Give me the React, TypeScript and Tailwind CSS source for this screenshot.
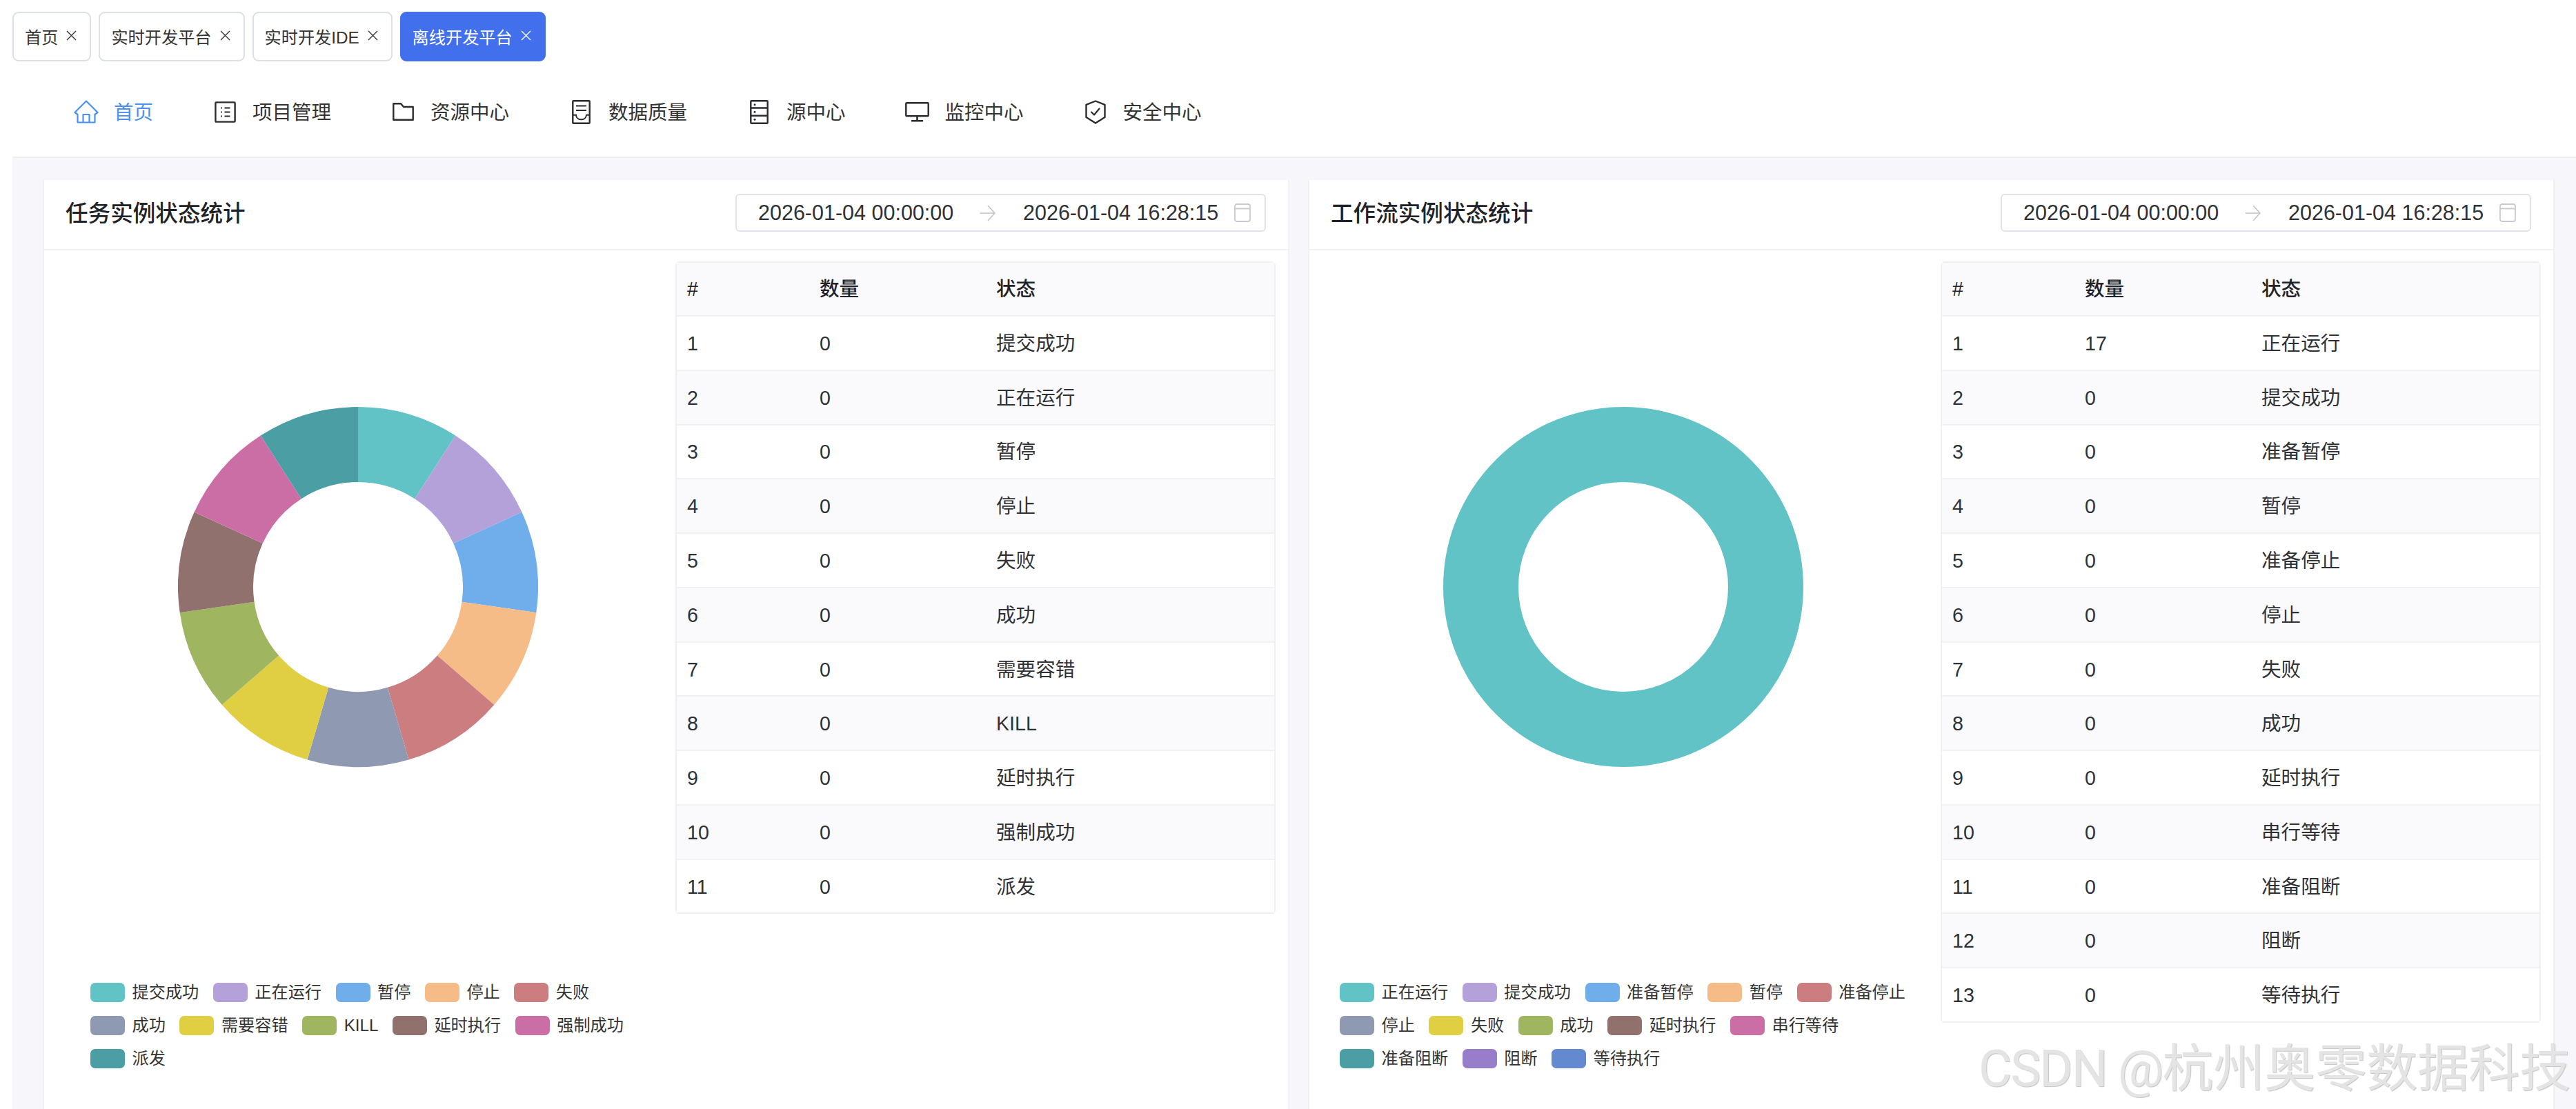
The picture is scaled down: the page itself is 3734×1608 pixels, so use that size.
import type { ReactNode } from 'react';

type Status = { label: string; color: string };
type TableRow = { count: number; label: string };

const palette = {
  teal: '#62c3c7',
  lavender: '#b4a1da',
  blue: '#70aeeb',
  peach: '#f5bc88',
  rose: '#cb7d7f',
  slate: '#8f99b2',
  yellow: '#e0cf43',
  green: '#a0b560',
  brown: '#91716d',
  pink: '#cc6ea6',
  darkTeal: '#4b9ea3',
  purple: '#987eca',
  indigo: '#638ad0',
};

const taskLegend: Status[] = [
  { label: '提交成功', color: palette.teal },
  { label: '正在运行', color: palette.lavender },
  { label: '暂停', color: palette.blue },
  { label: '停止', color: palette.peach },
  { label: '失败', color: palette.rose },
  { label: '成功', color: palette.slate },
  { label: '需要容错', color: palette.yellow },
  { label: 'KILL', color: palette.green },
  { label: '延时执行', color: palette.brown },
  { label: '强制成功', color: palette.pink },
  { label: '派发', color: palette.darkTeal },
];

const flowLegend: Status[] = [
  { label: '正在运行', color: palette.teal },
  { label: '提交成功', color: palette.lavender },
  { label: '准备暂停', color: palette.blue },
  { label: '暂停', color: palette.peach },
  { label: '准备停止', color: palette.rose },
  { label: '停止', color: palette.slate },
  { label: '失败', color: palette.yellow },
  { label: '成功', color: palette.green },
  { label: '延时执行', color: palette.brown },
  { label: '串行等待', color: palette.pink },
  { label: '准备阻断', color: palette.darkTeal },
  { label: '阻断', color: palette.purple },
  { label: '等待执行', color: palette.indigo },
];

const taskRows: TableRow[] = taskLegend.map((s) => ({ count: 0, label: s.label }));
const flowRows: TableRow[] = flowLegend.map((s, i) => ({ count: i === 0 ? 17 : 0, label: s.label }));

const tabs = [
  { label: '首页', active: false },
  { label: '实时开发平台', active: false },
  { label: '实时开发IDE', active: false },
  { label: '离线开发平台', active: true },
];

const stroke = { fill: 'none', stroke: 'currentColor', strokeWidth: 2.4 };

const navItems: { label: string; active?: boolean; icon: ReactNode }[] = [
  {
    label: '首页',
    active: true,
    icon: (
      <svg width="36" height="34" viewBox="0 0 36 34" {...stroke} strokeWidth={2.2} strokeLinejoin="round">
        <path d="M18 1.5 L1.5 18 L5.5 21 V32.5 H30.5 V21 L34.5 18 Z" />
        <path d="M13.5 32.5 V21 H22.5 V32.5" />
      </svg>
    ),
  },
  {
    label: '项目管理',
    icon: (
      <svg width="31" height="31" viewBox="0 0 31 31" {...stroke}>
        <rect x="1.4" y="1.4" width="28.2" height="28.2" rx="1" />
        <path d="M9.2 9.5 H11 M14.5 9.5 H22.5 M9.2 15.5 H11 M14.5 15.5 H22.5 M9.2 21.5 H11 M14.5 21.5 H22.5" strokeWidth={1.9} />
      </svg>
    ),
  },
  {
    label: '资源中心',
    icon: (
      <svg width="31" height="26" viewBox="0 0 31 26" {...stroke} strokeLinejoin="round">
        <path d="M1.3 1.3 H12 L16 6 H29.7 V24.7 H1.3 Z" />
      </svg>
    ),
  },
  {
    label: '数据质量',
    icon: (
      <svg width="27" height="35" viewBox="0 0 27 35" {...stroke}>
        <rect x="1.3" y="1.3" width="24.4" height="32.4" rx="1" />
        <path d="M6 8.5 H21 M6 15 H21" strokeWidth={2} />
        <path d="M1.3 21.7 H6 C6.5 30.5 20.5 30.5 21 21.7 H25.7" strokeWidth={2} />
      </svg>
    ),
  },
  {
    label: '源中心',
    icon: (
      <svg width="27" height="35" viewBox="0 0 27 35" {...stroke}>
        <rect x="1.3" y="1.3" width="24.4" height="32.4" rx="1" />
        <path d="M1.3 11.5 H25.7 M1.3 22.8 H25.7" />
        <circle cx="7" cy="6.7" r="1.5" fill="currentColor" stroke="none" />
        <circle cx="7" cy="17.3" r="1.5" fill="currentColor" stroke="none" />
        <circle cx="7" cy="28.3" r="1.5" fill="currentColor" stroke="none" />
      </svg>
    ),
  },
  {
    label: '监控中心',
    icon: (
      <svg width="35" height="29" viewBox="0 0 35 29" {...stroke}>
        <rect x="1.3" y="1.3" width="32.4" height="19" rx="1" />
        <path d="M17.5 20.5 V27 M9 27.3 H26" strokeWidth={2.6} />
      </svg>
    ),
  },
  {
    label: '安全中心',
    icon: (
      <svg width="30" height="35" viewBox="0 0 30 35" {...stroke} strokeLinejoin="round">
        <path d="M15 1.5 L28.5 6.8 V25 L15 33.5 L1.5 25 V6.8 Z" />
        <path d="M8.5 17 L13 21.5 L21 12" strokeWidth={2.2} />
      </svg>
    ),
  },
];

// one slice of the ring, angles in degrees clockwise from the top
function slicePath(cx: number, cy: number, r: number, inner: number, from: number, to: number) {
  const pt = (radius: number, deg: number) => {
    const a = ((deg - 90) * Math.PI) / 180;
    return `${cx + radius * Math.cos(a)} ${cy + radius * Math.sin(a)}`;
  };
  return `M${pt(r, from)} A${r} ${r} 0 0 1 ${pt(r, to)} L${pt(inner, to)} A${inner} ${inner} 0 0 0 ${pt(inner, from)} Z`;
}

function Donut({ colors }: { colors: string[] }) {
  if (colors.length === 1) {
    return (
      <svg width="522" height="524" viewBox="0 0 522 524">
        <circle cx="261" cy="262" r="206.5" fill="none" stroke={colors[0]} strokeWidth="109" />
      </svg>
    );
  }
  const step = 360 / colors.length;
  return (
    <svg width="522" height="524" viewBox="0 0 522 524">
      {colors.map((color, i) => (
        <path key={color} d={slicePath(261, 262, 261, 152, i * step, (i + 1) * step)} fill={color} />
      ))}
    </svg>
  );
}

function Legend({ items, className }: { items: Status[]; className: string }) {
  return (
    <div className={`mt-[312px] flex w-[830px] flex-wrap gap-x-[20.5px] gap-y-[20px] ${className}`}>
      {items.map((item) => (
        <div key={item.label} className="flex h-[28px] items-center gap-[10.5px] text-[24.2px] text-[#333]">
          <span className="h-[28px] w-[50px] rounded-[7px]" style={{ backgroundColor: item.color }} />
          <span>{item.label}</span>
        </div>
      ))}
    </div>
  );
}

function DateRange({ end }: { end: string }) {
  return (
    <div className="flex h-[55px] w-[769px] items-center whitespace-nowrap rounded-[6px] border-2 border-[#e2e2e8] pl-[31px] text-[30.5px] text-[#2f3136]">
      <span className="w-[284px]">2026-01-04 00:00:00</span>
      <svg className="ml-[37px] mr-[40px]" width="23" height="26" viewBox="0 0 23 26" fill="none" stroke="#c4c4c8" strokeWidth="1.6">
        <path d="M0.5 13 H22 M12 2 L22 13 L12 24" />
      </svg>
      <span className="w-[276px]">{end}</span>
      <svg className="ml-[30px]" width="24" height="27" viewBox="0 0 24 27" fill="none" stroke="#cbcbcf" strokeWidth="1.8">
        <rect x="1" y="1" width="22" height="25" rx="3" />
        <path d="M1 7.5 H23" />
      </svg>
    </div>
  );
}

function StatusTable({ rows }: { rows: TableRow[] }) {
  return (
    <div className="mt-[16px] w-[870px] self-start rounded-[6px] border-x-2 border-t-2 border-[#f0f0f5] text-[28.6px] text-[#2f3136]">
      <div className="grid h-[78px] grid-cols-[192px_256px_1fr] items-center border-b-2 border-[#f0f0f5] bg-[#fafafc] font-medium text-[#1f2329]">
        <span className="pl-[15px]">#</span>
        <span className="pl-[15px]">数量</span>
        <span className="pl-[15px]">状态</span>
      </div>
      {rows.map((row, i) => (
        <div
          key={row.label}
          className={`grid h-[78.77px] grid-cols-[192px_256px_1fr] items-center border-b-2 border-[#f0f0f5] pt-[2px] ${
            i % 2 === 1 ? 'bg-[#fafafc]' : 'bg-white'
          }`}
        >
          <span className="pl-[15px]">{i + 1}</span>
          <span className="pl-[15px]">{row.count}</span>
          <span className="pl-[15px]">{row.label}</span>
        </div>
      ))}
    </div>
  );
}

function StatCard({
  title,
  end,
  legend,
  legendClass,
  rows,
  ring,
}: {
  title: string;
  end: string;
  legend: Status[];
  legendClass: string;
  rows: TableRow[];
  ring: string[];
}) {
  return (
    <section className="flex h-full w-[1807px] flex-col border-x-2 border-[#f0f0f5] bg-white">
      <header className="flex h-[102px] items-center justify-between border-b-2 border-[#f0f0f5] pb-[5px] pl-[31px] pr-[32px]">
        <h2 className="pt-[3px] text-[32.6px] font-medium text-[#1f2329]">{title}</h2>
        <DateRange end={end} />
      </header>
      <div className="flex">
        <div className="w-[915px]">
          <div className="ml-[194px] mt-[226px]">
            <Donut colors={ring} />
          </div>
          <Legend items={legend} className={legendClass} />
        </div>
        <StatusTable rows={rows} />
      </div>
    </section>
  );
}

export default function App() {
  return (
    <div className="relative flex h-[1608px] w-[3734px] flex-col overflow-hidden bg-white font-['Liberation_Sans','Noto_Sans_CJK_SC',sans-serif]">
      {/* Tabs */}
      <div className="flex h-[89px] items-start gap-[11px] pl-[18px] pt-[17px]">
        {tabs.map((tab) => (
          <div
            key={tab.label}
            className={`flex h-[72px] items-center rounded-[9px] border-2 pl-[16px] pr-[19px] text-[24.2px] ${
              tab.active ? 'border-[#4270ed] bg-[#4270ed] text-white' : 'border-[#dcdfe6] bg-white text-[#333]'
            }`}
          >
            <span className="pt-[5px]">{tab.label}</span>
            <svg className="mb-[3px] ml-[12px]" width="15" height="15" viewBox="0 0 15 15" fill="none" stroke="currentColor" strokeWidth="1.4">
              <path d="M1 1 L14 14 M14 1 L1 14" />
            </svg>
          </div>
        ))}
      </div>

      {/* Nav */}
      <nav className="flex h-[138px] items-start gap-[86px] pl-[107px] pt-[55px] text-[28.5px] text-[#333]">
        {navItems.map((item) => (
          <div key={item.label} className={`flex h-[36px] items-center gap-[22px] ${item.active ? 'text-[#4a90f0]' : ''}`}>
            <span className={`flex w-[36px] justify-center ${item.active ? '' : 'text-[#2a2c30]'}`}>{item.icon}</span>
            <span className="pt-[2px]">{item.label}</span>
          </div>
        ))}
      </nav>

      {/* Content */}
      <main className="ml-[18px] flex flex-1 gap-[27px] overflow-hidden border-t-2 border-[#eeeef3] bg-[#f7f7fb] pl-[44px] pt-[32px]">
        <StatCard
          title="任务实例状态统计"
          end="2026-01-04 16:28:15"
          legend={taskLegend}
          legendClass="ml-[67px]"
          rows={taskRows}
          ring={taskLegend.map((s) => s.color)}
        />
        <StatCard
          title="工作流实例状态统计"
          end="2026-01-04 16:28:15"
          legend={flowLegend}
          legendClass="ml-[44px]"
          rows={flowRows}
          ring={[palette.teal]}
        />
      </main>

      {/* Watermark */}
      <div className="absolute left-[2868px] top-[1494px] whitespace-nowrap text-[74px] text-[#e4e4e4] [text-shadow:1px_1px_1px_#c4c4c4]">
        <span className="font-['Roboto'] tracking-[-2px]">CSDN @</span>杭州奥零数据科技
      </div>
    </div>
  );
}
